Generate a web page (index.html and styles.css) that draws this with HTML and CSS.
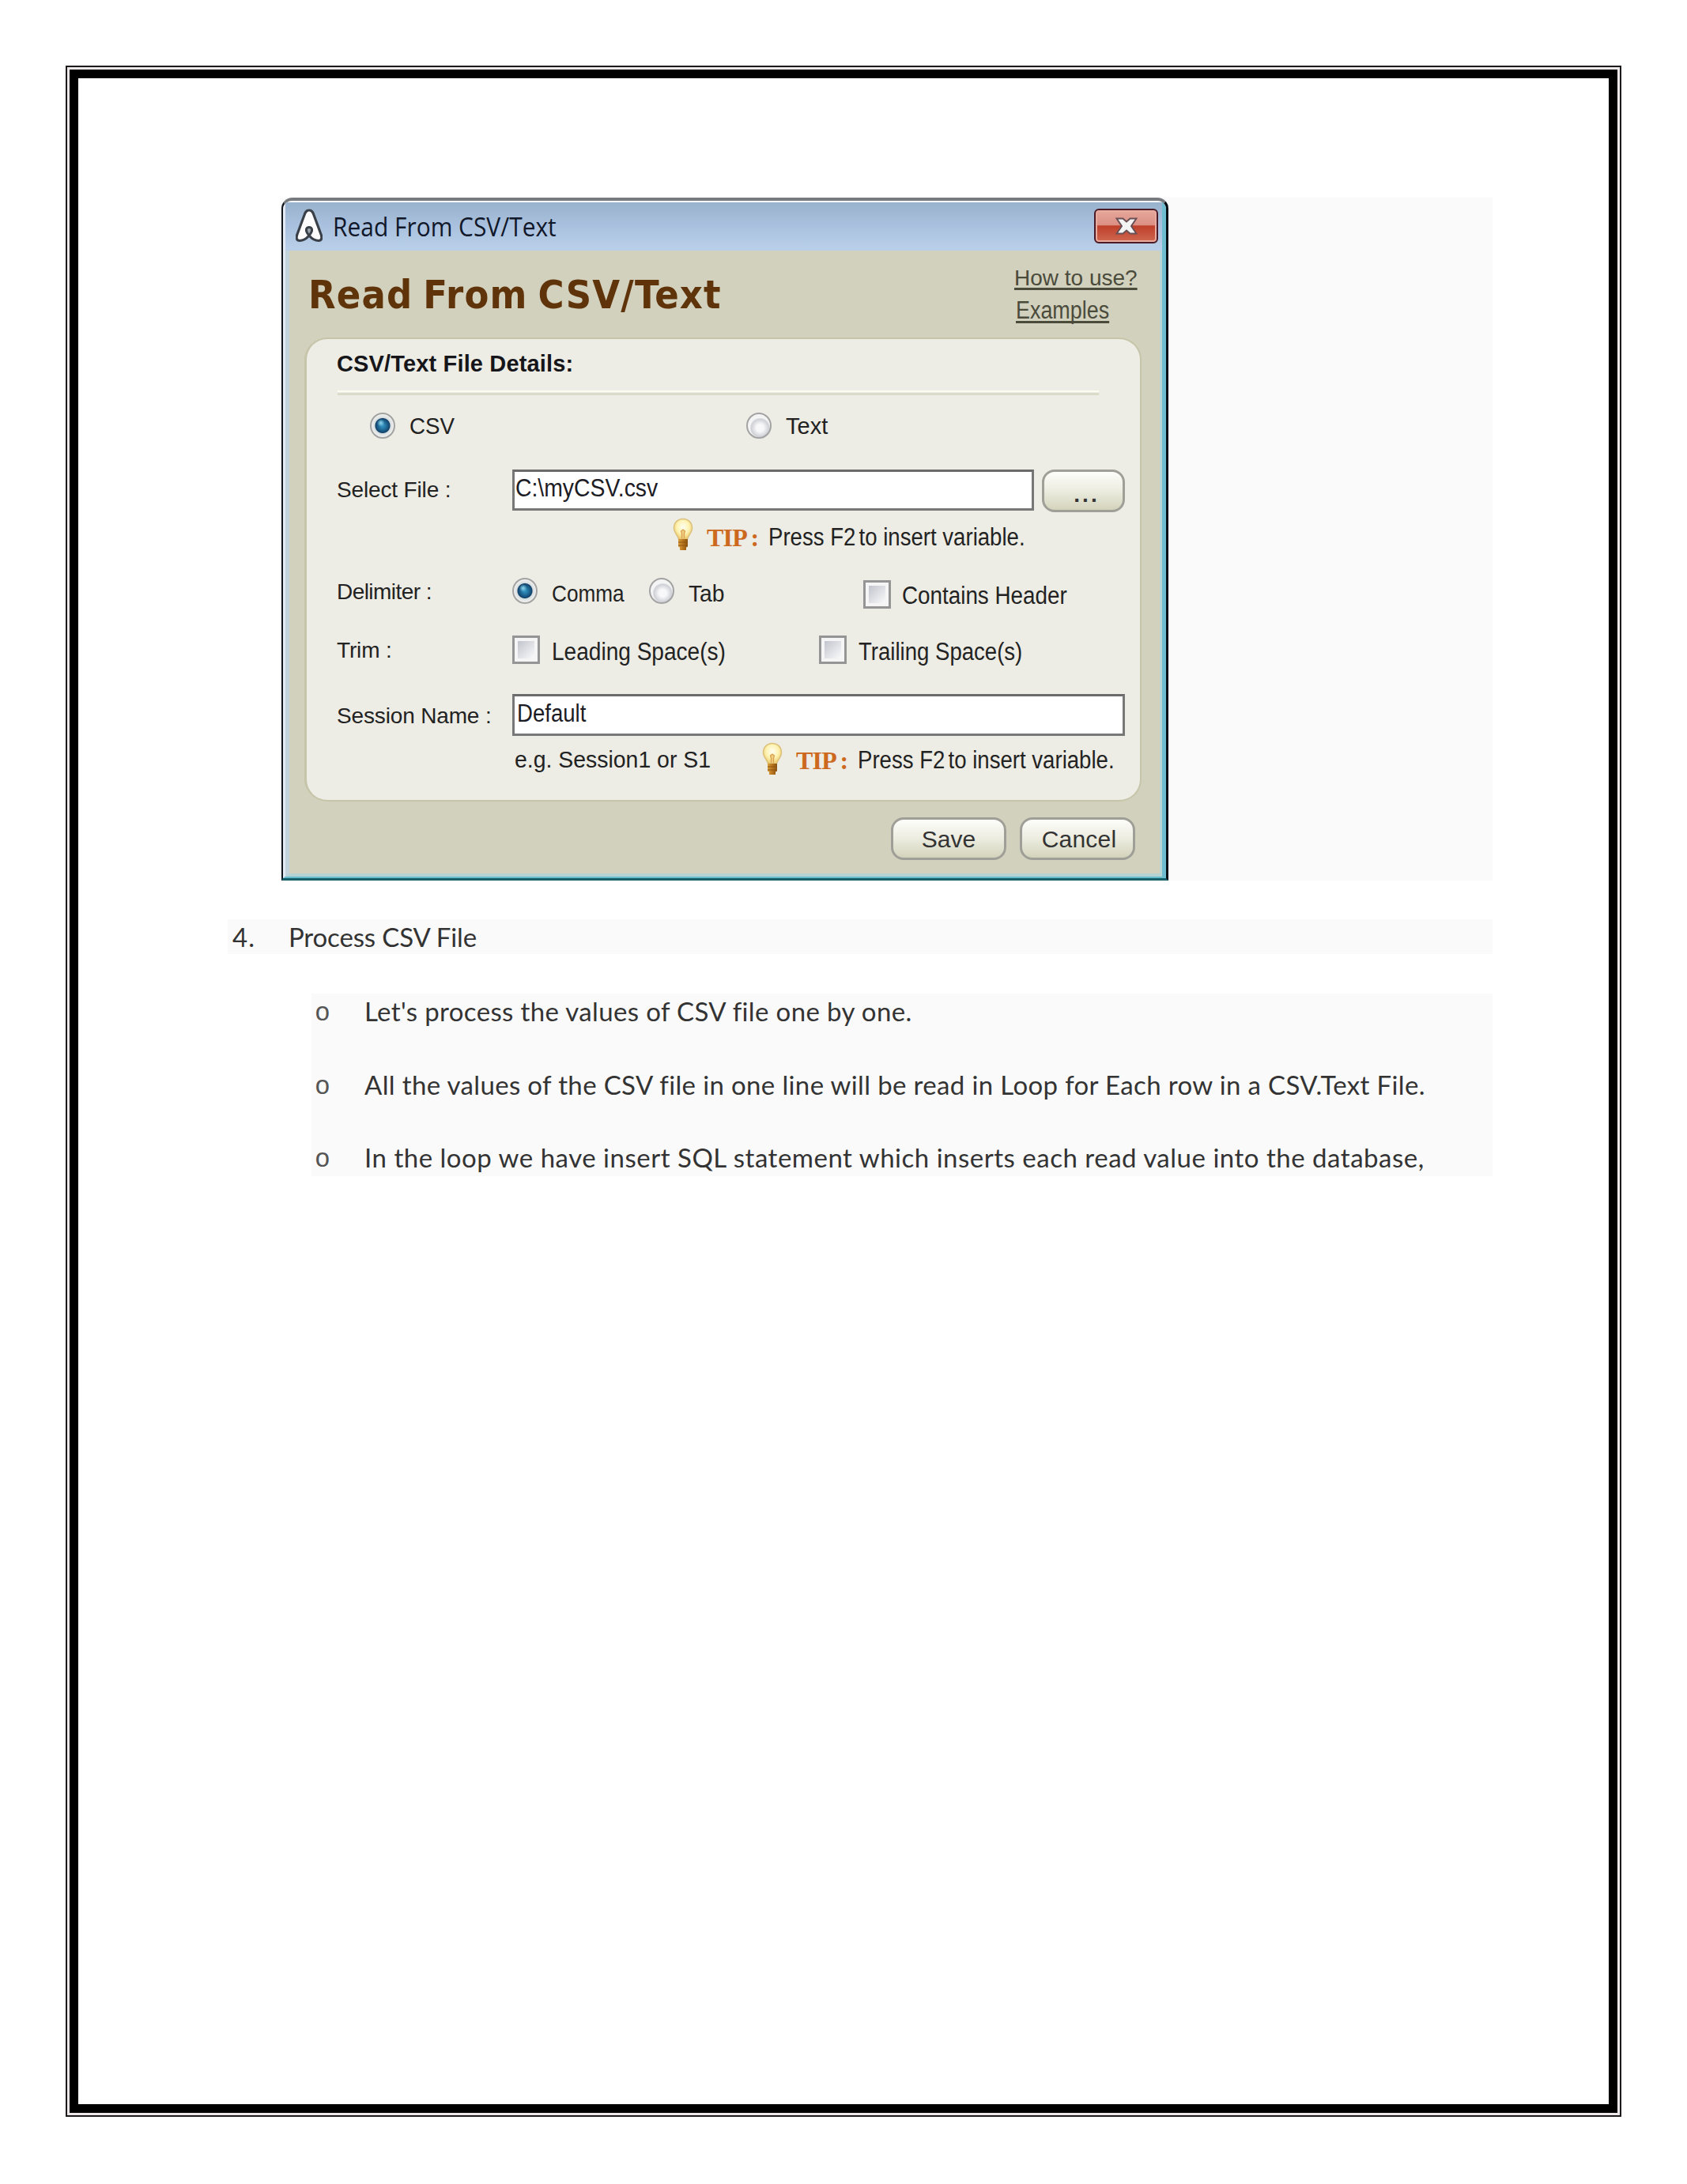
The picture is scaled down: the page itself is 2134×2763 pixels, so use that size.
FILE: index.html
```html
<!DOCTYPE html>
<html lang="en">
<head>
<meta charset="utf-8">
<title>Read From CSV/Text</title>
<link rel="stylesheet" href="styles.css">
</head>
<body>
<svg class="defs" width="0" height="0" aria-hidden="true">
  <defs>
    <radialGradient id="glow" cx=".5" cy=".4" r=".6"><stop offset="0" stop-color="#fffef0"/><stop offset=".55" stop-color="#fdf3b4"/><stop offset="1" stop-color="#efcb6a"/></radialGradient>
    <linearGradient id="brass"><stop offset="0" stop-color="#d9a040"/><stop offset=".5" stop-color="#b8731c"/><stop offset="1" stop-color="#8a5412"/></linearGradient>
    <symbol id="bulb" viewBox="0 0 26 42">
      <path d="M13 1.500C6 1.500 1.500 6.500 1.500 13c0 6 5 9 6 14h11c1-5 6-8 6-14C24.500 6.500 20 1.500 13 1.500z" fill="url(#glow)" stroke="#dcc07a" stroke-width="1.500"/>
      <path d="M11.500 26v-6l-1-3 2.500-2 2.500 2-1 3v6" fill="#f0d080" stroke="#d9a050" stroke-width="1.300"/>
      <path d="M7 27h12v9.500l-2 1V41H9v-3.500l-2-1z" fill="url(#brass)"/>
      <path d="M7 31h12M7 35h12" stroke="#8a5412" stroke-width="1"/>
    </symbol>
  </defs>
</svg>
<div class="frame">
  <main class="page">
    <div class="figure">
      <section class="dialog">
        <div class="glass">
          <header class="titlebar">
            <svg class="logo" viewBox="0 0 34 43"><path d="M17 2C13 2 12 5 11 8L2.500 31C0 37 1 40.500 5 40.500c5 0 9-3 12-6.500 3 3.500 7 6.500 12 6.500 4 0 5-3.500 2.500-9.500L23 8C22 5 21 2 17 2z" fill="#fdfdfd" stroke="#3a4048" stroke-width="3.200"/><path d="M17 34c-3-3.500-4-5.500-3.500-8 .7-3.500 6.300-3.500 7 0 .5 2.500-.5 4.500-3.500 8z" fill="#9aa2ac" stroke="#3a4048" stroke-width="3"/></svg>
            <span class="caption">Read From CSV/Text</span>
            <span class="close"><svg viewBox="0 0 28 22"><path d="M1.500 1.500h8L14 5.500l4.500-4h8L20 11l6.500 9.500h-8L14 16.500l-4.500 4h-8L8 11z" fill="#f4f4f4" stroke="#6a5054" stroke-width="2"/></svg></span>
          </header>
          <div class="body">
            <div class="heading">
              <h1>Read From CSV/Text</h1>
              <nav class="links"><a class="how">How to use?</a><a class="examples">Examples</a></nav>
            </div>
            <div class="panel">
              <h2>CSV/Text File Details:</h2>
              <div class="rule"></div>
              <div class="row type">
                <span class="radio on"></span><span class="txt t-csv">CSV</span>
                <span class="radio r-text"></span><span class="txt t-text">Text</span>
              </div>
              <div class="row file">
                <span class="label">Select File :</span>
                <span class="input in-file"><span class="val v-file">C:\myCSV.csv</span></span>
                <span class="btn browse">...</span>
              </div>
              <div class="row tip1">
                <svg class="bulb"><use href="#bulb"/></svg><span class="tip">TIP :</span><span class="press">Press F2<span class="tight"> </span>to insert variable.</span>
              </div>
              <div class="row delim">
                <span class="label">Delimiter :</span>
                <span class="radio on"></span><span class="txt t-comma">Comma</span>
                <span class="radio r-tab"></span><span class="txt t-tab">Tab</span>
                <span class="check c-header"></span><span class="txt t-header">Contains Header</span>
              </div>
              <div class="row trim">
                <span class="label">Trim :</span>
                <span class="check"></span><span class="txt t-lead">Leading Space(s)</span>
                <span class="check c-trail"></span><span class="txt t-trail">Trailing Space(s)</span>
              </div>
              <div class="row session">
                <span class="label">Session Name :</span>
                <span class="input in-session"><span class="val v-default">Default</span></span>
              </div>
              <div class="row tip2">
                <span class="txt t-eg">e.g. Session1 or S1</span>
                <svg class="bulb"><use href="#bulb"/></svg><span class="tip">TIP :</span><span class="press">Press F2<span class="tight"> </span>to insert variable.</span>
              </div>
            </div>
            <div class="footer"><span class="btn">Save</span><span class="btn cancel">Cancel</span></div>
          </div>
        </div>
      </section>
    </div>
    <div class="step"><span class="num">4.</span><span class="step-title">Process CSV File</span></div>
    <ul class="notes">
      <li><i>o</i><span class="n1">Let's process the values of CSV file one by one.</span></li>
      <li><i>o</i><span class="n2">All the values of the CSV file in one line will be read in Loop for Each row in a CSV.Text File.</span></li>
      <li><i>o</i><span class="n3">In the loop we have insert SQL statement which inserts each read value into the database,</span></li>
    </ul>
  </main>
</div>
</body>
</html>
```
FILE: styles.css
```css
* { box-sizing: border-box; }
body { margin: 0; background: #fff; overflow: hidden; font-family: "Liberation Sans", Arial, sans-serif; }
.defs { display: block; }
.frame { margin: 83px 0 0 83px; width: 1968px; height: 2595px; border: 2px solid #1c1a1b; padding: 3px; background: #ece8e9; }
.page { height: 100%; border: 11px solid #000; padding: 151px 0 0 189px; background: #fff; }

.figure { margin-left: 66px; width: 1534px; height: 864px; padding-left: 2px; background: #fafafa; }
.dialog { width: 1122px; height: 864px; border-style: solid; border-width: 4px 3px 3px 2px; border-color: #777b80 #040c14 #17606a #11161e; border-radius: 14px 14px 0 0; background: #d2d1bd; overflow: hidden; }
.glass { height: 857px; border-style: solid; border-width: 2px 5px 2px 3px; border-color: #f4f8fb #6dbcd0 #63bccb #e4eaf4; border-radius: 10px 10px 0 0; }
.titlebar { display: flex; height: 61px; background: linear-gradient(#98b1cc, #a8c0dd 45%, #bad0ea); }
.logo { width: 34px; height: 43px; margin: 8px 0 0 13px; flex: none; }
.caption { margin-left: 13px; font: 32px/62px "Open Sans", sans-serif; color: #10182a; white-space: nowrap; transform: scaleX(.935); transform-origin: 0 0; }
.close { width: 81px; height: 44px; margin: 8px 5px 0 auto; border: 2px solid #4b1c28; border-radius: 6px; box-shadow: inset 0 0 0 2px #e9aaa0; background: linear-gradient(#e6a79c, #dc8f83 48%, #bf3f2a 49%, #cf6850); display: flex; align-items: center; justify-content: center; }
.close svg { width: 28px; height: 22px; }

.body { height: 792px; border-style: solid; border-width: 0 3px 4px 5px; border-color: #b9d4d4 #b9d4d4 #b5d2d4 #c3d3dc; background: #d2d1bd; }
.heading { display: flex; height: 112px; }
h1 { margin: 0 0 0 24px; width: 893px; font: bold 50px/112px "DejaVu Sans Condensed", "DejaVu Sans", sans-serif; font-stretch: condensed; letter-spacing: 1.2px; word-spacing: -4px; color: #60340a; white-space: nowrap; }
.links { display: flex; flex-direction: column; align-items: flex-start; padding-top: 17px; color: #4b4b3c; line-height: 36px; white-space: nowrap; text-decoration: underline; text-decoration-thickness: 3px; text-underline-offset: 3px; text-decoration-skip-ink: none; }
.how { font-size: 28px; }
.examples { font-size: 31px; margin: 5px 0 0 2px; transform: scaleX(.868); transform-origin: 0 0; }

.panel { margin-left: 22px; width: 1054px; height: 583px; padding-top: 13px; border-radius: 26px; background: #edede5; box-shadow: -3px 0 0 #c6c5a9, 0 0 0 2px #c6c5a9; }
h2 { margin: 0 0 0 38px; font: bold 29px/36px "Liberation Sans", Arial, sans-serif; letter-spacing: .15px; color: #15151a; }
.rule { margin: 16px 0 0 39px; width: 963px; height: 6px; border-top: 2px solid #fcfcf0; border-bottom: 3px solid #dbdbca; }
.row { display: flex; align-items: flex-start; color: #222; line-height: 36px; }
.row > * { flex: none; white-space: nowrap; }
.label { width: 222px; margin-left: 38px; font-size: 28px; letter-spacing: -.15px; }
.txt, .val, .press { transform-origin: 0 0; }

.radio { width: 32px; height: 33px; margin-top: 1px; border: 2px solid #a3a3a3; border-radius: 50%; background: radial-gradient(circle at 55% 60%, #f8f8fa 0 20%, #cfd0d6 48%, #f4f4f4 56%); }
.radio.on { background: radial-gradient(circle at 42% 38%, #8fd8f0 0, #8fd8f000 20%), radial-gradient(circle closest-side, #2f8cba 0 12%, #154d78 58%, #123f66 64%, #d6dde0 72%, #f0f0ee 100%); }
.check { width: 35px; height: 36px; border: 3px solid #959595; background: linear-gradient(135deg, #c2c4cd, #fafafb) center / 21px 22px no-repeat #f5f5f5; }
.input { display: block; border: 3px solid #777; border-top-color: #6b6b6b; background: #fff; color: #1c1c24; font-size: 31px; }
.val { display: block; }
.btn { display: block; text-align: center; border: 3px solid #9f9f98; border-radius: 16px; background: linear-gradient(#fdfdfa, #ecece0 50%, #d3d3bc); color: #333; }

.type { margin-top: 21px; height: 40px; font-size: 29px; }
.type .radio.on { margin-left: 80px; }
.t-csv { margin-left: 18px; width: 60px; transform: scaleX(.955); }
.r-text { margin-left: 366px; }
.t-text { margin-left: 18px; }

.file { margin-top: 33px; height: 54px; }
.file .label { margin-top: 8px; }
.in-file { width: 660px; height: 52px; padding: 3px 0 0 1px; }
.v-file { transform: scaleX(.915); }
.browse { margin-left: 10px; width: 105px; height: 54px; font: bold 28px/57px "Liberation Sans", Arial, sans-serif; letter-spacing: 3px; padding-left: 8px; }

.tip1 { margin-top: 6px; height: 44px; padding-left: 463px; }
.bulb { width: 26px; height: 42px; margin-top: 1px; }
.tip { width: 64px; margin: 8px 0 0 17px; font: bold 32px/36px "Liberation Serif", serif; letter-spacing: -.8px; word-spacing: -1px; color: #cc691f; }
.press { margin: 8px 0 0 14px; font-size: 31px; transform: scaleX(.89); }
.tight { word-spacing: -4px; }

.delim { margin-top: 32px; height: 40px; }
.delim .label { margin-top: 1px; letter-spacing: -.55px; }
.delim .txt { margin-top: 3px; }
.t-comma { width: 105px; margin-left: 18px; font-size: 30px; transform: scaleX(.872); }
.r-tab { margin-left: 18px; }
.t-tab { width: 50px; margin-left: 18px; font-size: 30px; transform: scaleX(.94); }
.c-header { margin: 4px 0 0 171px; }
.delim .t-header { margin: 6px 0 0 14px; font-size: 31px; transform: scaleX(.897); }

.trim { margin-top: 33px; height: 38px; }
.trim .label { margin-top: 2px; }
.trim .check { margin-top: 1px; }
.trim .txt { margin-top: 4px; font-size: 31px; }
.t-lead { margin-left: 15px; width: 240px; transform: scaleX(.905); }
.c-trail { margin-left: 98px; }
.t-trail { margin-left: 15px; transform: scaleX(.889); }

.session { margin-top: 37px; height: 53px; }
.session .label { margin-top: 10px; }
.in-session { width: 775px; height: 53px; padding: 4px 0 0 3px; }
.v-default { transform: scaleX(.89); }

.tip2 { margin-top: 7px; padding-left: 263px; }
.t-eg { width: 313px; margin-top: 5px; font-size: 29px; transform: scaleX(.98); }
.tip2 .tip, .tip2 .press { margin-top: 6px; }

.footer { display: flex; margin-top: 22px; padding-left: 761px; }
.footer .btn { width: 146px; height: 54px; font-size: 30px; line-height: 50px; }
.footer .cancel { margin-left: 17px; letter-spacing: .2px; padding-left: 4px; }

.step { display: flex; margin-top: 49px; width: 1600px; height: 44px; background: #fafafa; font: 33px/44px Lato, Carlito, sans-serif; color: #333; }
.num { width: 71px; margin-left: 6px; letter-spacing: 1px; }
.step-title { letter-spacing: -.15px; }
.notes { list-style: none; margin: 50px 0 0 106px; padding: 0; width: 1494px; height: 231px; background: #fafafa; font: 33px/44px Lato, Carlito, sans-serif; color: #333; }
.notes li { display: flex; height: 44px; margin-bottom: 48.5px; white-space: nowrap; }
.notes i { width: 60px; padding-left: 4px; font: 33px/51px "Liberation Mono", monospace; color: #555; }
.notes span { margin-left: 7px; }
.n1 { letter-spacing: .36px; }
.notes .n2 { letter-spacing: .355px; }
.n3 { letter-spacing: .51px; }
```
